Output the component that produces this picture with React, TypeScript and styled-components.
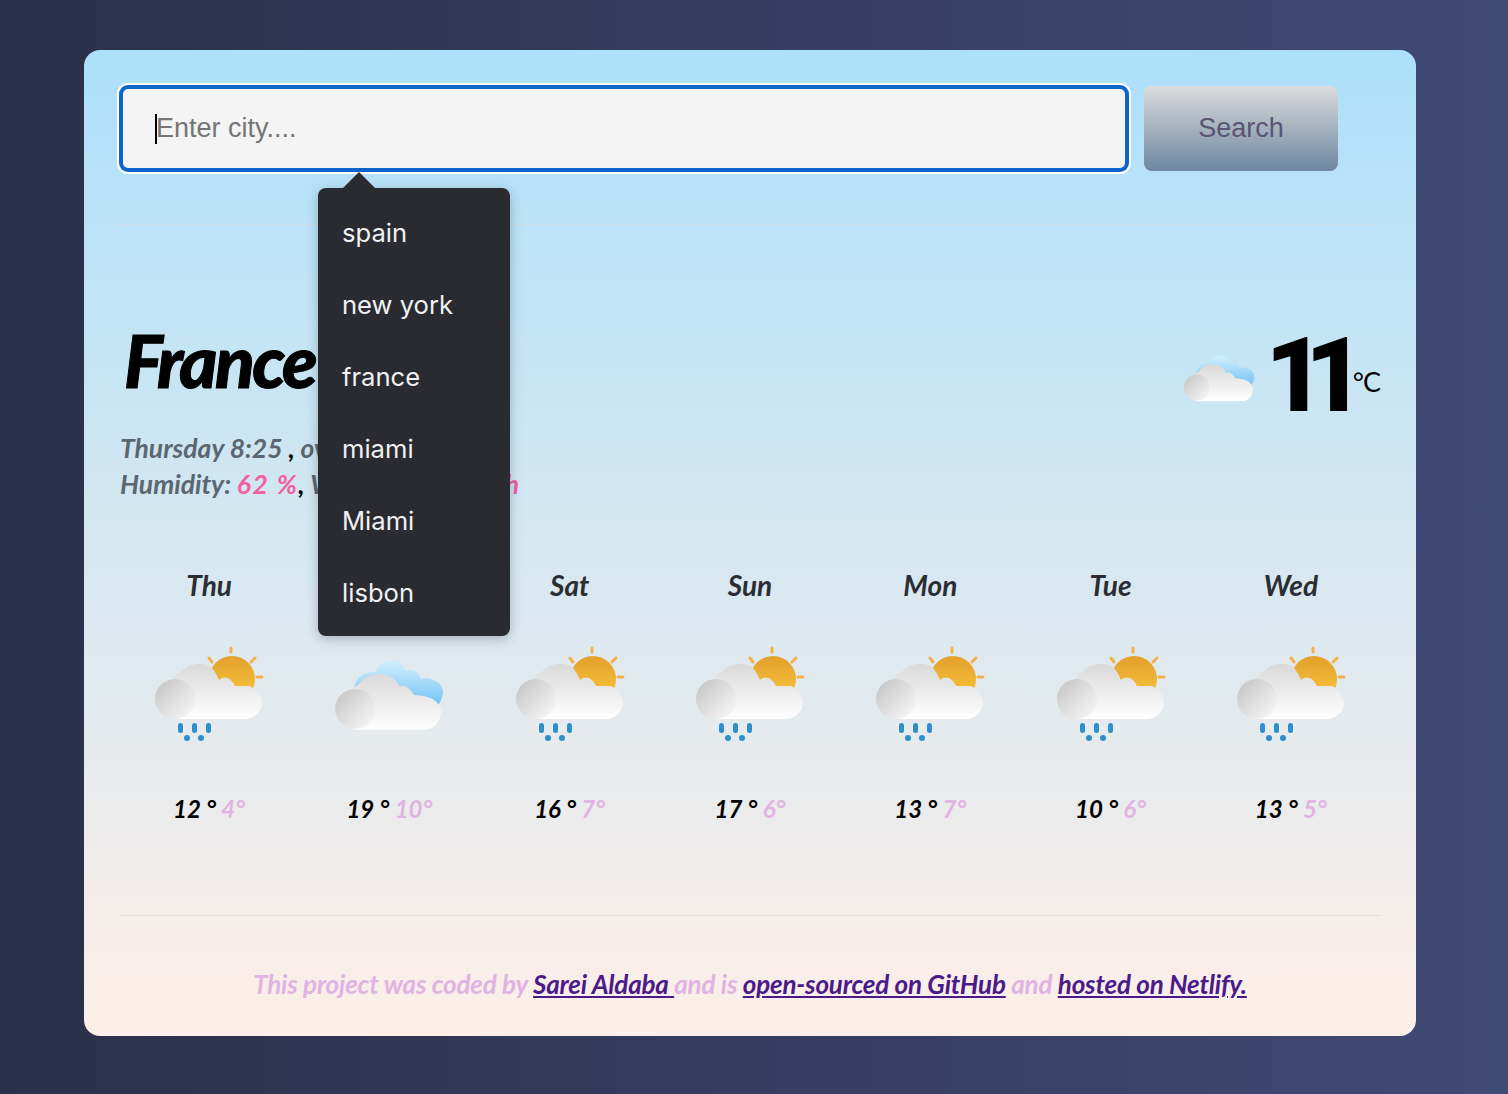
import React from 'react'
import styled, { createGlobalStyle } from 'styled-components'

const GlobalStyle = createGlobalStyle`
  html, body {
    margin: 0;
    padding: 0;
    min-height: 100%;
  }
  * { box-sizing: border-box; }
`

const Page = styled.div`
  width: 100%;
  min-height: 1094px;
  padding: 50px 92px 58px 84px;
  background: linear-gradient(90deg, #2a3049 0%, #3f4a75 100%);
`

const Card = styled.div`
  height: 986px;
  padding: 36px 36px 0;
  border-radius: 16px;
  background: linear-gradient(180deg, #ade0fa 0%, #feefe8 100%);
`

const SearchRow = styled.div`
  position: relative;
  display: flex;
  gap: 16px;
  height: 85px;
`

const CityInput = styled.div`
  position: relative;
  flex: none;
  width: 1008px;
  height: 85px;
  padding-left: 33px;
  display: flex;
  align-items: center;
  border: 3px solid #0d64c9;
  border-radius: 8px;
  box-shadow: 0 0 0 1px #0d64c9, 0 0 0 3px #ffffff;
  background: #f4f4f4;
  font-family: "Liberation Sans", Arial, sans-serif;
  font-size: 27px;
  color: #757575;
  &::before {
    content: '';
    position: absolute;
    left: 32px;
    top: 25px;
    width: 2px;
    height: 30px;
    background: #000;
  }
`

const SearchButton = styled.button`
  flex: none;
  width: 194px;
  height: 85px;
  border: none;
  border-radius: 8px;
  background: linear-gradient(180deg, #dcdcdc 0%, #6d87a1 100%);
  color: #5b5475;
  font-family: "Liberation Sans", Arial, sans-serif;
  font-size: 27px;
`

const Menu = styled.ul`
  position: absolute;
  z-index: 5;
  left: 198px;
  top: 102px;
  width: 192px;
  height: 448px;
  margin: 0;
  padding: 8px 0;
  list-style: none;
  border-radius: 8px;
  background: #2a2b30;
  box-shadow: 0 3px 12px rgba(30, 40, 60, 0.28);
  &::before {
    content: '';
    position: absolute;
    left: 24px;
    top: -16px;
    border-left: 17px solid transparent;
    border-right: 17px solid transparent;
    border-bottom: 17px solid #2a2b30;
  }
`

const MenuItem = styled.li`
  height: 72px;
  padding-left: 24px;
  display: flex;
  align-items: center;
  font-family: Inter, sans-serif;
  font-size: 25.6px;
  color: #f1f1f3;
`

const Divider = styled.hr<{ $top: number }>`
  margin: ${p => p.$top}px 0 0;
  border: none;
  height: 1px;
  background: rgba(215, 215, 220, 0.7);
`

const Current = styled.section`
  display: flex;
  justify-content: space-between;
  margin-top: 88px;
  height: 192px;
`

const CityName = styled.h1`
  margin: 0;
  height: 117px;
  padding-left: 4px;
  font-family: Lato, sans-serif;
  font-style: italic;
  font-weight: 900;
  font-size: 73px;
  line-height: 94px;
  letter-spacing: -2.6px;
  color: #000;
  -webkit-text-stroke: 1px #000;
`

const Meta = styled.p`
  margin: 0;
  font-family: Lato, sans-serif;
  font-style: italic;
  font-weight: 700;
  font-size: 26.5px;
  line-height: 36px;
  color: #5b6670;
  white-space: nowrap;
`

const Sep = styled.span`
  color: #000;
`

const Accent = styled.span<{ $spacing: number }>`
  color: #f2609f;
  letter-spacing: ${p => p.$spacing}px;
`

const Now = styled.div`
  display: flex;
  align-items: flex-start;
  padding-top: 21px;
`

const NowIcon = styled.div`
  margin-top: 11px;
`

const BigTemp = styled.span`
  margin-left: 10px;
  font-family: Roboto, sans-serif;
  font-weight: 900;
  font-size: 103px;
  line-height: 84px;
  letter-spacing: -20px;
  color: #000;
`

const Unit = styled.span`
  margin: 30px 0 0 8px;
  font-family: Lato, sans-serif;
  font-size: 27px;
  line-height: 36px;
  letter-spacing: -1px;
  color: #000;
`

const Week = styled.div`
  display: grid;
  grid-template-columns: repeat(7, 1fr);
  margin: 50px -1px 0 -1px;
`

const Day = styled.div`
  display: flex;
  flex-direction: column;
  align-items: center;
`

const DayName = styled.div`
  height: 44px;
  margin-top: 12px;
  font-family: Lato, sans-serif;
  font-style: italic;
  font-weight: 700;
  font-size: 28px;
  line-height: 36px;
  color: #2a2e33;
`

const IconSlot = styled.div`
  height: 108px;
  margin-top: 33px;
`

const Temps = styled.div`
  margin-top: 42px;
  font-family: Lato, sans-serif;
  font-style: italic;
  font-weight: 700;
  font-size: 24px;
  line-height: 30px;
  color: #000;
`

const Low = styled.span`
  color: #e0b3e2;
`

const Footer = styled.footer`
  margin-top: 50px;
  text-align: center;
  font-family: Lato, sans-serif;
  font-style: italic;
  font-weight: 700;
  font-size: 26px;
  line-height: 36px;
  letter-spacing: -0.2px;
  color: #e0b3e2;
`

const FooterLink = styled.a`
  color: #4b1a8a;
  text-decoration: underline;
`

const IconSvg = styled.svg`
  display: block;
  filter: blur(0.4px);
`

const CloudDefs = () => (
  <svg width="0" height="0" style={{ position: 'absolute' }}>
    <defs>
      <linearGradient id="sun" x1="0" y1="0" x2="0" y2="1">
        <stop offset="0" stopColor="#e2a02c" />
        <stop offset="1" stopColor="#fbc83c" />
      </linearGradient>
      <linearGradient id="cloud" x1="0" y1="0" x2="0" y2="1">
        <stop offset="0" stopColor="#d9d9d9" />
        <stop offset="1" stopColor="#ffffff" />
      </linearGradient>
      <linearGradient id="puff" x1="0" y1="0" x2="1" y2="1">
        <stop offset="0" stopColor="#c2c2c2" />
        <stop offset="0.85" stopColor="#f2f2f2" />
      </linearGradient>
      <linearGradient id="sky" x1="0" y1="0" x2="0" y2="1">
        <stop offset="0" stopColor="#d2f0fd" />
        <stop offset="1" stopColor="#66baf1" />
      </linearGradient>
    </defs>
  </svg>
)

const SunRain = () => (
  <IconSvg width="110" height="108" viewBox="0 0 110 108">
    <circle cx="78" cy="35" r="23" fill="url(#sun)" />
    <g stroke="#f6b04a" strokeWidth="3" strokeLinecap="round">
      <line x1="77" y1="4" x2="77" y2="8" />
      <line x1="55" y1="14" x2="58" y2="18" />
      <line x1="97" y1="18" x2="101" y2="14" />
      <line x1="103" y1="33" x2="108" y2="33" />
    </g>
    <path
      d="M22 75 C8 75 4 40 28 27 C33 22 39 20 45 20 C51 20 54 21 57 23 C61 27 63 31 65 36 C68 33 71 33 74 34 C77 36 79 38 81 42 L96 42 C103 46 108 52 108 58 C108 68 100 75 90 75 Z"
      fill="url(#cloud)"
    />
    <circle cx="21" cy="55" r="20" fill="url(#puff)" />
    <g fill="#2d8fcb">
      <rect x="24" y="79" width="5" height="10" rx="2.5" />
      <rect x="38" y="79" width="5" height="10" rx="2.5" />
      <rect x="52" y="79" width="5" height="10" rx="2.5" />
      <circle cx="33" cy="94" r="3" />
      <circle cx="47" cy="94" r="3" />
    </g>
  </IconSvg>
)

const SkyCloud = ({ size = 110 }: { size?: number }) => (
  <IconSvg width={size} height={size * 0.98} viewBox="0 0 110 108">
    <path
      d="M20 44 C22 36 26 32 30 30 C36 28 40 28 42 28 C44 20 50 16 56 16 C64 16 70 21 72 27 C75 25 78 25 81 27 C84 29 86 32 87 35 C91 34 96 34 99 36 C106 38 110 44 109 50 C108 54 107 57 105 60 L60 70 Z"
      fill="url(#sky)"
    />
    <path
      d="M22 86 C8 86 4 52 26 39 C30 33 38 30 45 30 C55 30 62 35 66 43 C68 41 72 42 74 44 C77 46 79 49 80 51 L90 52 C100 54 107 60 107 68 C107 78 100 86 90 86 Z"
      fill="url(#cloud)"
    />
    <circle cx="21" cy="65" r="20" fill="url(#puff)" />
  </IconSvg>
)

const forecast = [
  { day: 'Thu', hi: 12, lo: 4, rain: true },
  { day: 'Fri', hi: 19, lo: 10, rain: false },
  { day: 'Sat', hi: 16, lo: 7, rain: true },
  { day: 'Sun', hi: 17, lo: 6, rain: true },
  { day: 'Mon', hi: 13, lo: 7, rain: true },
  { day: 'Tue', hi: 10, lo: 6, rain: true },
  { day: 'Wed', hi: 13, lo: 5, rain: true },
]

const cities = ['spain', 'new york', 'france', 'miami', 'Miami', 'lisbon']

const App: React.FC = () => {
  return (
    <Page>
      <GlobalStyle />
      <CloudDefs />
      <Card>
        <SearchRow>
          <CityInput>Enter city....</CityInput>
          <SearchButton>Search</SearchButton>
          <Menu>
            {cities.map(c => <MenuItem key={c}>{c}</MenuItem>)}
          </Menu>
        </SearchRow>
        <Divider $top={53} />
        <Current>
          <div>
            <CityName>France</CityName>
            <Meta>Thursday 8:25 <Sep>,</Sep> overcast clouds</Meta>
            <Meta>Humidity: <Accent $spacing={1.5}>62 %</Accent><Sep>,</Sep> Wind: <Accent $spacing={0.2}>11.32 km/h</Accent></Meta>
          </div>
          <Now>
            <NowIcon><SkyCloud size={72} /></NowIcon>
            <BigTemp>11</BigTemp>
            <Unit>°C</Unit>
          </Now>
        </Current>
        <Week>
          {forecast.map(f => (
            <Day key={f.day}>
              <DayName>{f.day}</DayName>
              <IconSlot>{f.rain ? <SunRain /> : <SkyCloud />}</IconSlot>
              <Temps>{f.hi} ° <Low>{f.lo}°</Low></Temps>
            </Day>
          ))}
        </Week>
        <Divider $top={91} />
        <Footer>
          This project was coded by <FooterLink>Sarei Aldaba </FooterLink>and is <FooterLink>open-sourced on GitHub</FooterLink> and <FooterLink>hosted on Netlify.</FooterLink>
        </Footer>
      </Card>
    </Page>
  )
}

export default App
